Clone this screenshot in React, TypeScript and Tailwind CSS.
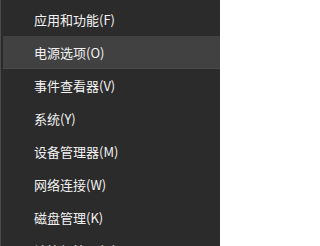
const items = [
  '应用和功能(F)',
  '电源选项(O)',
  '事件查看器(V)',
  '系统(Y)',
  '设备管理器(M)',
  '网络连接(W)',
  '磁盘管理(K)',
  '计算机管理(G)',
];

export default function App() {
  return (
    <div
      className="w-[220px] h-[246px] overflow-hidden bg-[#2b2b2b] border-l border-[#4a4a4a] pt-[3px] pl-[2px]"
      style={{ fontFamily: '"Noto Sans CJK SC", "Liberation Sans", sans-serif' }}
    >
      {items.map((label, i) => (
        <div
          key={label}
          className={
            i === 1
              ? 'h-[33px] flex items-center pl-[31px] bg-[#414141] border-b border-[#4a4a4a] text-[13px] text-[#f2f2f2] leading-none'
              : 'h-[33px] flex items-center pl-[31px] text-[13px] text-[#f2f2f2] leading-none'
          }
        >
          {label}
        </div>
      ))}
    </div>
  );
}
